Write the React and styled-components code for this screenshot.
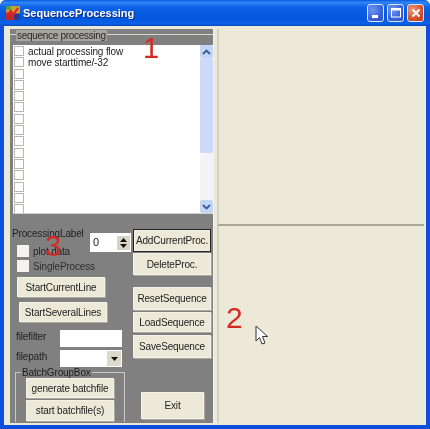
import React from "react";
import styled, { createGlobalStyle } from "styled-components";

const Global = createGlobalStyle`
  html, body { margin: 0; padding: 0; width: 430px; height: 429px; overflow: hidden; background: #fff; }
  * { box-sizing: border-box; }
`;

const Win = styled.div`
  position: relative;
  width: 430px; height: 429px;
  background: #0a50dc;
  border-radius: 6px 6px 0 0;
  display: flex; flex-direction: column;
  font-family: "Liberation Sans", Arial, sans-serif;
  font-size: 10px;
  letter-spacing: -0.15px;
  color: #1c1c1c;
  filter: blur(0.4px);
  overflow: hidden;
`;
const TitleBar = styled.div`
  height: 26px; flex: none;
  display: flex; align-items: center;
  padding: 0 6px 0 6px;
  background: linear-gradient(180deg, #0a5ae0 0%, #2f86f8 10%, #0b62e6 28%, #0457de 70%, #0a62e8 90%, #0448c0 100%);
`;
const Logo = styled.svg`width: 14px; height: 14px; flex: none; margin-right: 3px;`;
const Title = styled.div`
  flex: 1;
  font-weight: bold; font-size: 11px; color: #fff;
  text-shadow: 1px 1px 1px #0a2a80;
  letter-spacing: 0;
`;
const WinBtn = styled.div`
  width: 17px; height: 18px; margin-left: 3px;
  border: 1px solid #dfe8fb; border-radius: 3px;
  background: ${p => p.$close
    ? "radial-gradient(circle at 30% 30%, #ee9a7c, #d4512c 60%, #c23a18)"
    : "radial-gradient(circle at 30% 30%, #6f96ee, #3a62d8 60%, #2a4cc4)"};
  display: flex; align-items: center; justify-content: center;
`;
const Client = styled.div`
  flex: 1; min-height: 0;
  margin: 0 4px 4px 4px;
  background: #ece9d8;
  display: flex;
  padding: 3px 2px 2px 6px;
  gap: 3px;
`;
const Left = styled.div`
  width: 204px; flex: none;
  display: flex; flex-direction: column;
  background: #808080;
  border-right: 1px solid #f4f2e8;
`;
const GroupHead = styled.div`
  height: 16px; flex: none;
  position: relative;
  padding: 1px 0 0 6px;
  line-height: 11px;
  background: linear-gradient(180deg, #808080 0, #808080 5px, #d8d6ca 5px, #d8d6ca 6px, #808080 6px);
`;
const GroupTitle = styled.span`
  display: inline-block;
  background: #a6a59e; padding: 0 1px; color: #2a2a2a; font-size: 10px; letter-spacing: -0.3px;
`;
const ListBox = styled.div`
  height: 169px; flex: none;
  margin-left: 3px;
  background: #fff;
  display: flex;
  border-bottom: 1px solid #d0d0d0;
  overflow: hidden;
`;
const Rows = styled.div`
  flex: 1; padding: 1px 0 0 1px;
  display: flex; flex-direction: column; gap: 1.3px;
`;
const Row = styled.div`
  height: 10px; display: flex; align-items: center; gap: 4px;
  white-space: nowrap; font-size: 10px; color: #222;
`;
const Check = styled.span`
  width: 10px; height: 10px; flex: none;
  border: 1px solid #b8b8b0; background: #fff; display: block;
`;
const Scroll = styled.div`
  width: 13px; flex: none; background: #f4f3f8;
  display: flex; flex-direction: column;
`;
const ScrollBtn = styled.div`
  height: 13px; flex: none; background: #c4d4f4; border-radius: 2px;
  display: flex; align-items: center; justify-content: center;
`;
const Thumb = styled.div`height: 95px; background: #cddafa; border-radius: 2px;`;
const ScrollGap = styled.div`flex: 1;`;
const Panel = styled.div`
  flex: 1; display: grid; grid-template-columns: 120px 80px; gap: 0 1px;
  background: #808080; padding-top: 13px; padding-left: 2px;
`;
const LeftCol = styled.div`display: flex; flex-direction: column; align-items: flex-start;`;
const RightCol = styled.div`display: flex; flex-direction: column; align-items: flex-start; padding-top: 2px;`;
const LabelRow = styled.div`
  display: flex; width: 119px; height: 18px; flex: none; align-items: flex-start; justify-content: space-between;
`;
const Lbl = styled.div`color: #1e1e1e; white-space: nowrap; padding-top: 1px;`;
const Spin = styled.div`
  width: 41px; height: 19px; margin-top: 6px; background: #fff; display: flex; justify-content: flex-end;
  align-items: center; position: relative; padding-right: 1px;
`;
const SpinValue = styled.span`position: absolute; left: 3px; font-size: 11px; top: 3px;`;
const SpinBtns = styled.div`
  width: 13px; height: 14px; background: #d8d5c6; display: flex; flex-direction: column; align-items: center; justify-content: center; gap: 2px;
`;
const CheckRow = styled.div`
  display: flex; align-items: center; gap: 4px; height: 12px; flex: none; margin-left: 5px; margin-top: ${p => p.$mt || 0}px;
  color: ${p => p.$dim ? "#2e2e2e" : "#1e1e1e"}; white-space: nowrap;
`;
const BigCheck = styled.span`width: 12px; height: 12px; background: #f4f3ee; display: block; flex: none;`;
const Btn = styled.div`
  width: ${p => p.$w}px; height: ${p => p.$h}px;
  margin-left: ${p => p.$ml || 0}px; margin-top: ${p => p.$mt || 0}px;
  background: #ece9d8;
  border: 1px solid ${p => p.$focus ? "#222" : "#f4f2e6"};
  box-shadow: ${p => p.$focus ? "inset 0 0 0 1px #f4f2e6" : "1px 1px 0 #aaa89c"};
  display: flex; align-items: center; justify-content: center;
  white-space: nowrap; color: #222; flex: none;
`;
const FieldRow = styled.div`
  display: flex; width: 106px; margin-left: 4px; align-items: flex-start; justify-content: space-between; flex: none;
  height: ${p => p.$h}px; margin-top: ${p => p.$mt || 0}px;
`;
const Field = styled.div`
  width: 62px; height: ${p => p.$h}px; background: #fff; display: flex; justify-content: flex-end; align-items: center; padding-right: 1px;
`;
const Drop = styled.div`
  width: 14px; height: 15px; background: #dcd9ca; display: flex; align-items: center; justify-content: center;
`;
const Batch = styled.div`
  position: relative; width: 110px; height: 50px; margin-left: 3px; margin-top: 5px; flex: none;
  border: 1px solid #c8c8c8; border-bottom: none;
  display: flex; flex-direction: column; align-items: center; padding-top: 5px; gap: 2px;
`;
const BatchTitle = styled.span`
  position: absolute; top: -6px; left: 5px; background: #808080; padding: 0 1px; line-height: 11px; color: #1e1e1e;
`;
const Right = styled.div`flex: 1; display: flex; flex-direction: column; min-width: 0;`;
const Pane = styled.div`
  flex: ${p => p.$h ? `0 0 ${p.$h}px` : 1};
  background: #ece9d8;
  border-bottom: ${p => p.$h ? "2px solid #a8a698" : "none"};
  border-left: 2px solid #d4d1c2;
`;
const Mark = styled.div`
  position: absolute; color: #d42a22; font-size: ${p => p.$s || 30}px; line-height: 1; letter-spacing: 0;
  left: ${p => p.$x}px; top: ${p => p.$y}px; font-family: "Liberation Sans", Arial, sans-serif;
`;
const Cursor = styled.svg`position: absolute; left: 255px; top: 325px; width: 14px; height: 21px;`;

const Up = () => <svg width="9" height="6" viewBox="0 0 9 6"><path d="M1 5 L4.5 1.5 L8 5" fill="none" stroke="#3a5a9a" strokeWidth="1.8"/></svg>;
const Down = () => <svg width="9" height="6" viewBox="0 0 9 6"><path d="M1 1 L4.5 4.5 L8 1" fill="none" stroke="#3a5a9a" strokeWidth="1.8"/></svg>;

export default function App() {
  const rows = Array.from({ length: 15 });
  const labels = ["actual processing flow", "move starttime/-32"];
  return (
    <Win>
      <Global />
      <TitleBar>
        <Logo viewBox="0 0 15 15">
          <rect width="15" height="15" fill="#c8a030"/>
          <rect x="0" y="7" width="8" height="8" fill="#c02828"/>
          <rect x="8" y="8" width="7" height="7" fill="#303890"/>
          <path d="M1 12 L5 5 L8 9 L13 2" stroke="#e02020" strokeWidth="2" fill="none"/>
          <rect x="0" y="0" width="5" height="4" fill="#50a040"/>
        </Logo>
        <Title>SequenceProcessing</Title>
        <WinBtn><svg width="12" height="12"><rect x="2" y="8" width="6" height="3" fill="#fff"/></svg></WinBtn>
        <WinBtn><svg width="12" height="12"><rect x="1.5" y="2" width="9" height="8" fill="none" stroke="#fff"/><rect x="1" y="1" width="10" height="2.5" fill="#fff"/></svg></WinBtn>
        <WinBtn $close><svg width="12" height="12"><path d="M2.5 2.5 L9.5 9.5 M9.5 2.5 L2.5 9.5" stroke="#fff" strokeWidth="2"/></svg></WinBtn>
      </TitleBar>
      <Client>
        <Left>
          <GroupHead><GroupTitle>sequence processing</GroupTitle></GroupHead>
          <ListBox>
            <Rows>
              {rows.map((_, i) => (
                <Row key={i}><Check />{labels[i]}</Row>
              ))}
            </Rows>
            <Scroll>
              <ScrollBtn><Up /></ScrollBtn>
              <Thumb />
              <ScrollGap />
              <ScrollBtn><Down /></ScrollBtn>
            </Scroll>
          </ListBox>
          <Panel>
            <LeftCol>
              <LabelRow>
                <Lbl>ProcessingLabel</Lbl>
                <Spin><SpinValue>0</SpinValue><SpinBtns>
                  <svg width="7" height="4"><path d="M3.5 0 L7 4 L0 4Z" fill="#111"/></svg>
                  <svg width="7" height="4"><path d="M0 0 L7 0 L3.5 4Z" fill="#111"/></svg>
                </SpinBtns></Spin>
              </LabelRow>
              <CheckRow><BigCheck />plot data</CheckRow>
              <CheckRow $mt={3} $dim><BigCheck />SingleProcess</CheckRow>
              <Btn $w={88} $h={20} $ml={5} $mt={5}>StartCurrentLine</Btn>
              <Btn $w={88} $h={20} $ml={7} $mt={5}>StartSeveralLines</Btn>
              <FieldRow $h={17} $mt={8}><Lbl>filefilter</Lbl><Field $h={17} /></FieldRow>
              <FieldRow $h={17} $mt={3}><Lbl>filepath</Lbl><Field $h={17}><Drop>
                <svg width="7" height="4"><path d="M0 0 L7 0 L3.5 4Z" fill="#111"/></svg>
              </Drop></Field></FieldRow>
              <Batch>
                <BatchTitle>BatchGroupBox</BatchTitle>
                <Btn $w={88} $h={20}>generate batchfile</Btn>
                <Btn $w={88} $h={21}>start batchfile(s)</Btn>
              </Batch>
            </LeftCol>
            <RightCol>
              <Btn $w={78} $h={23} $focus>AddCurrentProc.</Btn>
              <Btn $w={78} $h={22} $mt={1}>DeleteProc.</Btn>
              <Btn $w={78} $h={23} $mt={12}>ResetSequence</Btn>
              <Btn $w={78} $h={20} $mt={2}>LoadSequence</Btn>
              <Btn $w={78} $h={23} $mt={3}>SaveSequence</Btn>
              <Btn $w={63} $h={27} $ml={8} $mt={34}>Exit</Btn>
            </RightCol>
          </Panel>
        </Left>
        <Right>
          <Pane $h={197} />
          <Pane />
        </Right>
      </Client>
      <Mark $x={143} $y={34} $s={29}>1</Mark>
      <Mark $x={226} $y={303} $s={30}>2</Mark>
      <Mark $x={45} $y={232} $s={29}>3</Mark>
      <Cursor viewBox="0 0 14 21">
        <path d="M1 1 L1 16 L4.5 12.5 L7 19 L10 18 L7.5 11.5 L12.5 11.5 Z" fill="#fff" stroke="#333" strokeWidth="1"/>
      </Cursor>
    </Win>
  );
}
